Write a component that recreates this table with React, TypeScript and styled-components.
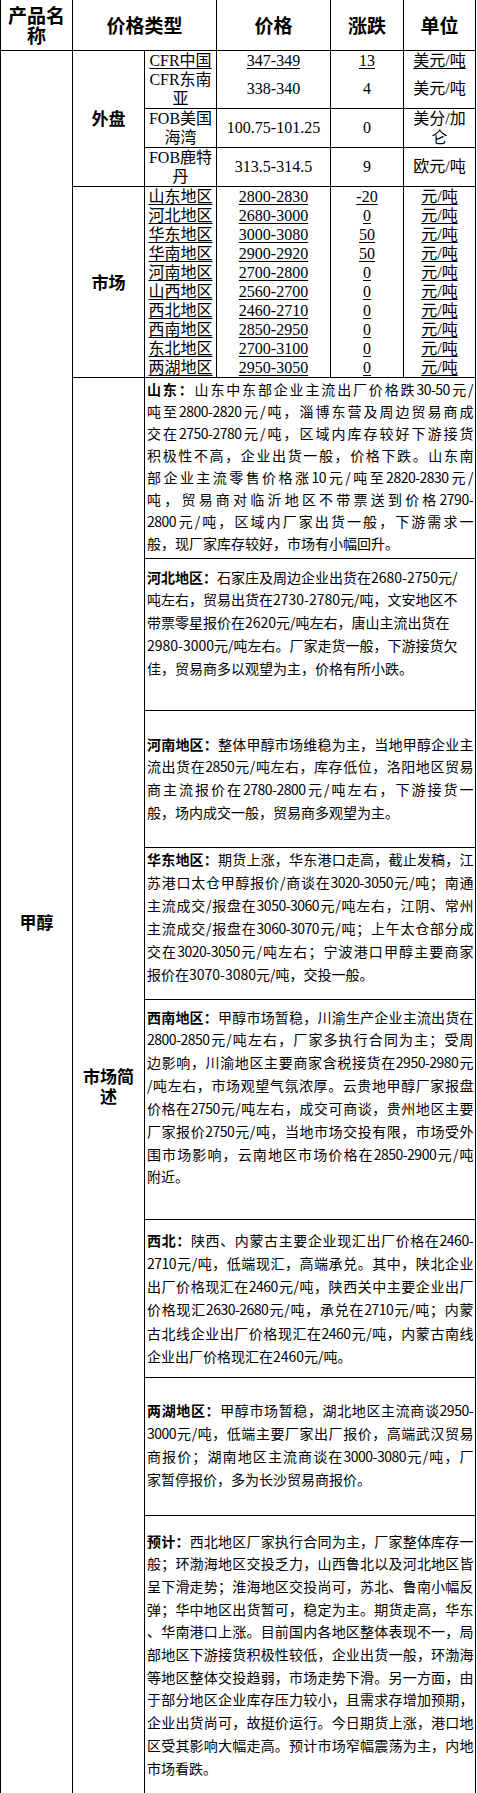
import React from 'react';
import styled, { createGlobalStyle, css } from 'styled-components';

const Global = createGlobalStyle`
  html, body { margin: 0; padding: 0; background: #fff; }
  body { font-family: "Noto Sans CJK SC", sans-serif; color: #000; }
`;

const Table = styled.table`
  border-collapse: collapse;
  table-layout: fixed;
  width: 475px;
`;

const Col = styled.col<{ $w: number }>`
  width: ${(p) => p.$w}px;
`;

const Row = styled.tr<{ $h: number }>`
  height: ${(p) => p.$h}px;
`;

const HeadCell = styled.th`
  border: 1px solid #000;
  border-top: none;
  padding: 0 3px;
  font: 700 19px/20px "Noto Sans CJK SC", sans-serif;
  text-align: center;
  vertical-align: middle;
`;

const GroupCell = styled.td`
  border: 1px solid #000;
  padding: 0 3px;
  font: 700 17px/20px "Noto Sans CJK SC", sans-serif;
  text-align: center;
  vertical-align: middle;
`;

type Open = 'none' | 'top' | 'bottom' | 'both';

const Cell = styled.td<{ $u?: boolean; $open?: Open }>`
  border: 1px solid #000;
  padding: 0 2px;
  font: 400 16px/19px "Liberation Serif", "Noto Sans CJK SC", serif;
  text-align: center;
  vertical-align: middle;
  ${(p) =>
    p.$u &&
    css`
      text-decoration: underline;
      text-underline-offset: 2px;
    `}
  ${(p) =>
    (p.$open === 'top' || p.$open === 'both') &&
    css`
      border-top: none;
    `}
  ${(p) =>
    (p.$open === 'bottom' || p.$open === 'both') &&
    css`
      border-bottom: none;
    `}
`;

const DescCell = styled.td<{ $pt: number }>`
  border: 1px solid #000;
  padding: ${(p) => p.$pt}px 2px 0 2px;
  vertical-align: top;
  font: 400 14px "Noto Sans CJK SC", sans-serif;
`;

const Line = styled.div<{ $lh: number; $j: boolean }>`
  line-height: ${(p) => p.$lh}px;
  text-align: left;
  ${(p) =>
    p.$j &&
    css`
      text-align: justify;
      text-align-last: justify;
      letter-spacing: -0.5px;
    `}
`;

const Label = styled.b`
  font-weight: 700;
`;

type Quote = { type: string; price: string; chg: string; unit: string; h: number; u?: boolean };

const foreign: Quote[] = [
  { type: 'CFR中国', price: '347-349', chg: '13', unit: '美元/吨', h: 19, u: true },
  { type: 'CFR东南亚', price: '338-340', chg: '4', unit: '美元/吨', h: 38 },
  { type: 'FOB美国海湾', price: '100.75-101.25', chg: '0', unit: '美分/加仑', h: 38 },
  { type: 'FOB鹿特丹', price: '313.5-314.5', chg: '9', unit: '欧元/吨', h: 38 },
];

const market: [string, string, string][] = [
  ['山东地区', '2800-2830', '-20'],
  ['河北地区', '2680-3000', '0'],
  ['华东地区', '3000-3080', '50'],
  ['华南地区', '2900-2920', '50'],
  ['河南地区', '2700-2800', '0'],
  ['山西地区', '2560-2700', '0'],
  ['西北地区', '2460-2710', '0'],
  ['西南地区', '2850-2950', '0'],
  ['东北地区', '2700-3100', '0'],
  ['两湖地区', '2950-3050', '0'],
];

type Desc = { label: string; lines: string[]; lh: number; pt: number; h: number; justify: boolean };

const descs: Desc[] = [
  {
    label: '山东：',
    lh: 22,
    pt: 0,
    h: 181,
    justify: true,
    lines: [
      '山东中东部企业主流出厂价格跌30-50元/',
      '吨至2800-2820元/吨，淄博东营及周边贸易商成',
      '交在2750-2780元/吨，区域内库存较好下游接货',
      '积极性不高，企业出货一般，价格下跌。山东南',
      '部企业主流零售价格涨10元/吨至2820-2830元/',
      '吨，贸易商对临沂地区不带票送到价格2790-',
      '2800元/吨，区域内厂家出货一般，下游需求一',
      '般，现厂家库存较好，市场有小幅回升。',
    ],
  },
  {
    label: '河北地区：',
    lh: 22.75,
    pt: 7,
    h: 152,
    justify: false,
    lines: [
      '石家庄及周边企业出货在2680-2750元/',
      '吨左右，贸易出货在2730-2780元/吨，文安地区不',
      '带票零星报价在2620元/吨左右，唐山主流出货在',
      '2980-3000元/吨左右。厂家走货一般，下游接货欠',
      '佳，贸易商多以观望为主，价格有所小跌。',
    ],
  },
  {
    label: '河南地区：',
    lh: 22.75,
    pt: 22,
    h: 137,
    justify: true,
    lines: [
      '整体甲醇市场维稳为主，当地甲醇企业主',
      '流出货在2850元/吨左右，库存低位，洛阳地区贸易',
      '商主流报价在2780-2800元/吨左右，下游接货一',
      '般，场内成交一般，贸易商多观望为主。',
    ],
  },
  {
    label: '华东地区：',
    lh: 23,
    pt: 0,
    h: 152,
    justify: true,
    lines: [
      '期货上涨，华东港口走高，截止发稿，江',
      '苏港口太仓甲醇报价/商谈在3020-3050元/吨；南通',
      '主流成交/报盘在3050-3060元/吨左右，江阴、常州',
      '主流成交/报盘在3060-3070元/吨；上午太仓部分成',
      '交在3020-3050元/吨左右；宁波港口甲醇主要商家',
      '报价在3070-3080元/吨，交投一般。',
    ],
  },
  {
    label: '西南地区：',
    lh: 22.85,
    pt: 6,
    h: 220,
    justify: true,
    lines: [
      '甲醇市场暂稳，川渝生产企业主流出货在',
      '2800-2850元/吨左右，厂家多执行合同为主；受周',
      '边影响，川渝地区主要商家含税接货在2950-2980元',
      '/吨左右，市场观望气氛浓厚。云贵地甲醇厂家报盘',
      '价格在2750元/吨左右，成交可商谈，贵州地区主要',
      '厂家报价2750元/吨，当地市场交投有限，市场受外',
      '围市场影响，云南地区市场价格在2850-2900元/吨',
      '附近。',
    ],
  },
  {
    label: '西北：',
    lh: 23.3,
    pt: 9,
    h: 158,
    justify: true,
    lines: [
      '陕西、内蒙古主要企业现汇出厂价格在2460-',
      '2710元/吨，低端现汇，高端承兑。其中，陕北企业',
      '出厂价格现汇在2460元/吨，陕西关中主要企业出厂',
      '价格现汇2630-2680元/吨，承兑在2710元/吨；内蒙',
      '古北线企业出厂价格现汇在2460元/吨，内蒙古南线',
      '企业出厂价格现汇在2460元/吨。',
    ],
  },
  {
    label: '两湖地区：',
    lh: 23,
    pt: 21,
    h: 138,
    justify: true,
    lines: [
      '甲醇市场暂稳，湖北地区主流商谈2950-',
      '3000元/吨，低端主要厂家出厂报价，高端武汉贸易',
      '商报价；湖南地区主流商谈在3000-3080元/吨，厂',
      '家暂停报价，多为长沙贸易商报价。',
    ],
  },
  {
    label: '预计：',
    lh: 22.7,
    pt: 14,
    h: 279,
    justify: true,
    lines: [
      '西北地区厂家执行合同为主，厂家整体库存一',
      '般；环渤海地区交投乏力，山西鲁北以及河北地区皆',
      '呈下滑走势；淮海地区交投尚可，苏北、鲁南小幅反',
      '弹；华中地区出货暂可，稳定为主。期货走高，华东',
      '、华南港口上涨。目前国内各地区整体表现不一，局',
      '部地区下游接货积极性较低，企业出货一般，环渤海',
      '等地区整体交投趋弱，市场走势下滑。另一方面，由',
      '于部分地区企业库存压力较小，且需求存增加预期，',
      '企业出货尚可，故挺价运行。今日期货上涨，港口地',
      '区受其影响大幅走高。预计市场窄幅震荡为主，内地',
      '市场看跌。',
    ],
  },
];

const totalRows = foreign.length + market.length + descs.length;

function marketOpen(i: number): Open {
  if (i === 0) return 'bottom';
  if (i === market.length - 1) return 'top';
  return 'both';
}

function foreignOpen(i: number): Open {
  if (i === 0) return 'bottom';
  if (i === 1) return 'top';
  return 'none';
}

export default function App() {
  return (
    <>
      <Global />
      <Table>
        <colgroup>
          <Col $w={72} />
          <Col $w={72} />
          <Col $w={72} />
          <Col $w={114} />
          <Col $w={73} />
          <Col $w={72} />
        </colgroup>
        <tbody>
          <Row $h={50}>
            <HeadCell>产品名称</HeadCell>
            <HeadCell colSpan={2}>价格类型</HeadCell>
            <HeadCell>价格</HeadCell>
            <HeadCell>涨跌</HeadCell>
            <HeadCell>单位</HeadCell>
          </Row>
          {foreign.map((q, i) => (
            <Row $h={q.h} key={q.type}>
              {i === 0 && <GroupCell rowSpan={totalRows}>甲醇</GroupCell>}
              {i === 0 && <GroupCell rowSpan={foreign.length}>外盘</GroupCell>}
              <Cell $u={q.u} $open={foreignOpen(i)}>{q.type}</Cell>
              <Cell $u={q.u} $open={foreignOpen(i)}>{q.price}</Cell>
              <Cell $u={q.u} $open={foreignOpen(i)}>{q.chg}</Cell>
              <Cell $u={q.u} $open={foreignOpen(i)}>{q.unit}</Cell>
            </Row>
          ))}
          {market.map(([area, price, chg], i) => (
            <Row $h={19} key={area}>
              {i === 0 && <GroupCell rowSpan={market.length}>市场</GroupCell>}
              <Cell $u $open={marketOpen(i)}>{area}</Cell>
              <Cell $u $open={marketOpen(i)}>{price}</Cell>
              <Cell $u $open={marketOpen(i)}>{chg}</Cell>
              <Cell $u $open={marketOpen(i)}>元/吨</Cell>
            </Row>
          ))}
          {descs.map((d, i) => (
            <Row $h={d.h} key={d.label}>
              {i === 0 && <GroupCell rowSpan={descs.length}>市场简述</GroupCell>}
              <DescCell colSpan={4} $pt={d.pt}>
                {d.lines.map((line, j) => (
                  <Line key={j} $lh={d.lh} $j={d.justify && j < d.lines.length - 1}>
                    {j === 0 && <Label>{d.label}</Label>}
                    {line}
                  </Line>
                ))}
              </DescCell>
            </Row>
          ))}
        </tbody>
      </Table>
    </>
  );
}
